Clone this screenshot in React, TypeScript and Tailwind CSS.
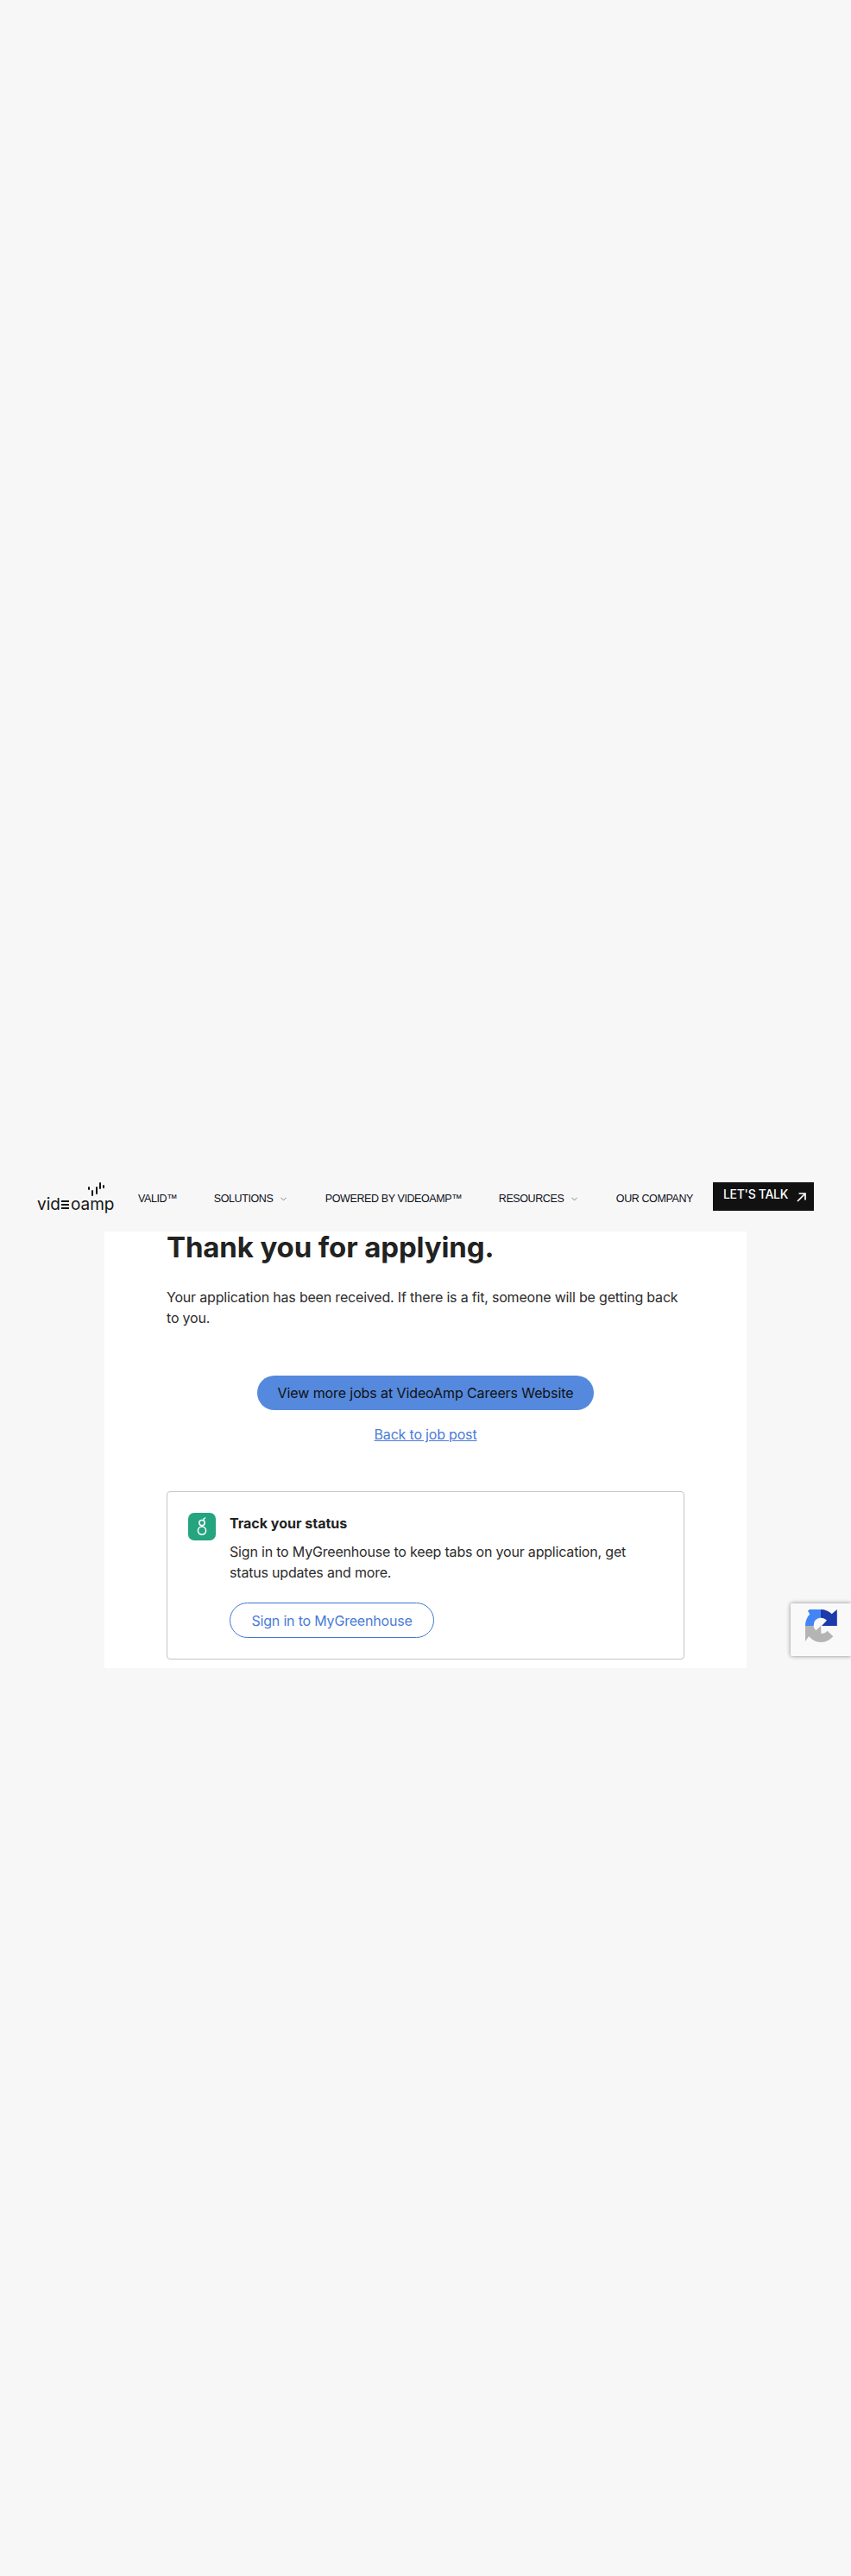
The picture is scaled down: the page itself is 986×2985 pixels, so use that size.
import { ChevronDown } from 'lucide-react';

const navItems = [
  { label: 'VALID™' },
  { label: 'SOLUTIONS', menu: true },
  { label: 'POWERED BY VIDEOAMP™' },
  { label: 'RESOURCES', menu: true },
  { label: 'OUR COMPANY' },
];

const Logo = () => (
  <div className="flex w-[88px] shrink-0 flex-col items-end">
    <svg width="20" height="16" viewBox="0 0 20 16" className="mr-[9px] block" fill="#141414">
      <rect x="0" y="5" width="2" height="4" rx="1" />
      <rect x="4" y="9" width="2" height="7" rx="1" />
      <rect x="9" y="5" width="2" height="9" rx="1" />
      <rect x="13" y="0" width="2" height="8" rx="1" />
      <rect x="17" y="3" width="2" height="4" rx="1" />
    </svg>
    <div className="mt-[1px] flex h-[18px] items-center self-start text-[19px] leading-[18px] font-normal tracking-normal text-[#141414]">
      <span>vid</span>
      <span className="mx-[1.5px] flex h-[10px] w-[9px] flex-col justify-between">
        <span className="h-[2px] bg-[#141414]" />
        <span className="h-[2px] bg-[#141414]" />
        <span className="h-[2px] bg-[#141414]" />
      </span>
      <span>oamp</span>
    </div>
  </div>
);

const GreenhouseIcon = () => (
  <div className="flex h-8 w-8 shrink-0 items-center justify-center rounded-[7px] bg-[#24a47f]">
    <svg width="32" height="32" viewBox="0 0 32 32" fill="none" stroke="#fff" strokeWidth="1.5">
      <circle cx="16" cy="20.6" r="4.6" />
      <circle cx="16" cy="11.6" r="3.2" />
      <path d="M17.6 8.800c.1-1.400.7-2.400 2-2.800" strokeLinecap="round" />
      <path d="M16 14.800v1.200" />
    </svg>
  </div>
);

const RecaptchaIcon = () => (
  <svg width="37" height="38" viewBox="0 0 37 38">
    <path fill="#1c3aa9" d="M18 0c5 0 9.500 2 12.700 5.200L36.800 0v19H19l6-6.200c-1.800-1.800-4.200-3-7-3z" />
    <path fill="#4285f4" d="M18 0v9.800c-3.500 0-6.500 2.200-7.700 5.200l-.7 4H0C0 13.500 2 9 5.200 5.500L3 1.500 5 0z" />
    <path fill="#b4b4b4" d="M0 19h9.600c.2 2 1.200 3.800 2.800 5.200L18 19l.5 9c2.800 0 5.300-1.200 7-3.300l6.800 6.600C29 35 24 38 18.500 38c-6 0-11-2.800-14.300-7L0 37z" />
  </svg>
);

export default function App() {
  return (
    <div className="relative h-[2985px] bg-[#f7f7f7] pt-[1370px] font-['Inter',sans-serif] text-[16px] tracking-[-0.19px] text-[#2c2c2c]">
      <header className="flex h-[57px] items-start px-[43px]">
        <Logo />
        <nav className="ml-[29px] flex h-[38px] w-[643px] shrink-0 items-center justify-between font-['Liberation_Sans',sans-serif] text-[12.5px] leading-none tracking-[-0.4px] text-[#0d0f1a]">
          {navItems.map((item) => (
            <a key={item.label} className="flex items-center gap-[7px] whitespace-nowrap">
              {item.label}
              {item.menu && <ChevronDown size={11} className="text-[#777]" />}
            </a>
          ))}
        </nav>
        <a className="ml-[23px] flex h-[33px] w-[117px] shrink-0 items-start gap-[10px] bg-[#111] pt-[6px] pl-[12px] text-[14px] leading-[16px] font-medium tracking-[-0.3px] whitespace-nowrap text-white">
          LET'S TALK
          <svg width="11" height="11" viewBox="0 0 11 11" fill="none" stroke="#fff" strokeWidth="1.7" className="mt-[6px]">
            <path d="M1 10 10 1M2.500 1H10v7.500" />
          </svg>
        </a>
      </header>

      <main className="mr-[121px] ml-[121px] h-[506px] bg-white pr-[72px] pl-[72px]">
        <h1 className="text-[33px] leading-[36px] font-bold tracking-[-0.13px] text-[#222]">
          Thank you for applying.
        </h1>
        <p className="mt-[28px] leading-[24px]">
          Your application has been received. If there is a fit, someone will be getting back to you.
        </p>
        <div className="mt-[55px] flex flex-col items-center">
          <a className="flex h-[40px] w-[390px] items-center justify-center rounded-full bg-[#5589dd] tracking-[-0.1px] text-[#111]">
            View more jobs at VideoAmp Careers Website
          </a>
          <a className="mt-[16px] leading-[24px] text-[#4a7bd8] underline">Back to job post</a>
        </div>
        <section className="mt-[54px] flex h-[195px] gap-4 rounded-[4px] border border-[#c4c4c4] pt-[24px] pl-[24px]">
          <GreenhouseIcon />
          <div>
            <h2 className="text-[16px] leading-[24px] font-bold tracking-normal text-[#222]">Track your status</h2>
            <p className="mt-[9px] w-[500px] leading-[24px]">
              Sign in to MyGreenhouse to keep tabs on your application, get status updates and more.
            </p>
            <a className="mt-[23px] flex h-[41px] w-[237px] items-center justify-center rounded-full border border-[#3f76d0] text-[#4a7bd8]">
              Sign in to MyGreenhouse
            </a>
          </div>
        </section>
      </main>

      <div className="absolute top-[1858px] right-0 flex h-[61px] w-[70px] rounded-l-[2px] bg-[#f9f9f9] pt-[7px] pl-[17px] shadow-[0_0_5px_rgba(0,0,0,0.45)]">
        <RecaptchaIcon />
      </div>
    </div>
  );
}
